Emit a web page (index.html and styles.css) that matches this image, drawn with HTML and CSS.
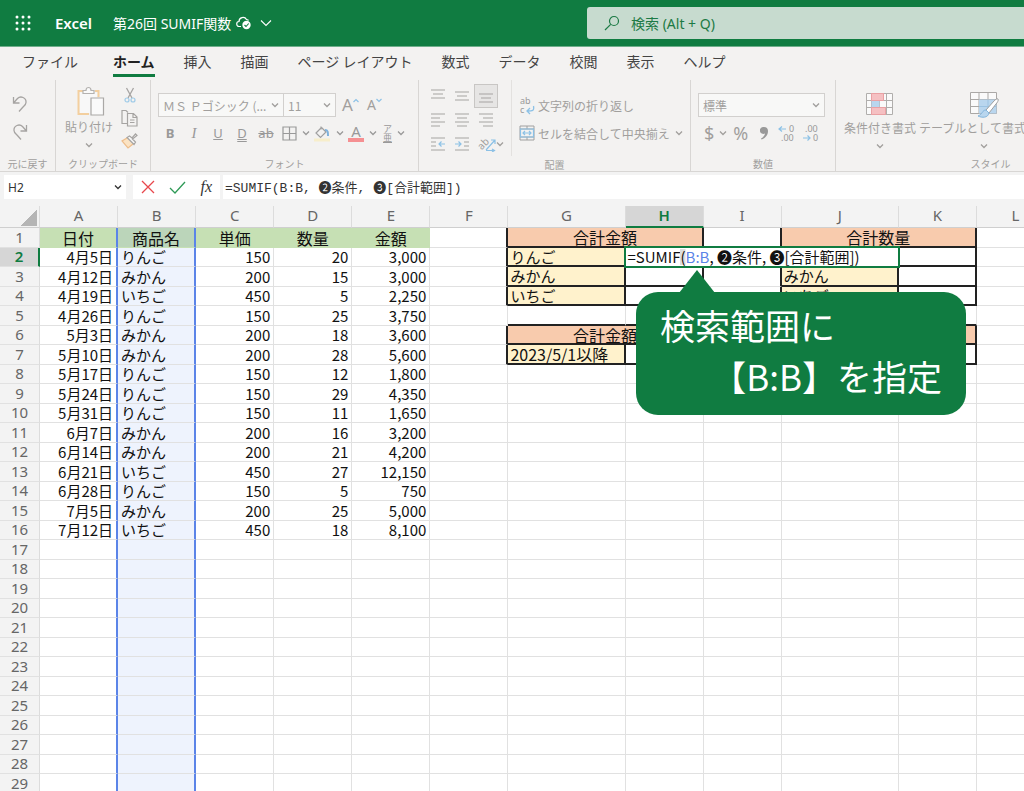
FILE: index.html
```html
<!DOCTYPE html>
<html lang="ja">
<head>
<meta charset="utf-8">
<title>第26回 SUMIF関数 - Excel</title>
<link rel="stylesheet" href="styles.css">
</head>
<body>
<svg class="defs" aria-hidden="true">
  <symbol id="chev" viewBox="0 0 8 8"><path d="M1 2.5l3 3 3-3" fill="none" stroke="currentColor" stroke-width="1.3"/></symbol>
</svg>
<header class="title-bar">
  <button class="launcher" aria-label="アプリ起動ツール"><svg width="18" height="18" viewBox="0 0 18 18" fill="#fff"><circle cx="3" cy="3" r="1.5"/><circle cx="9" cy="3" r="1.5"/><circle cx="15" cy="3" r="1.5"/><circle cx="3" cy="9" r="1.5"/><circle cx="9" cy="9" r="1.5"/><circle cx="15" cy="9" r="1.5"/><circle cx="3" cy="15" r="1.5"/><circle cx="9" cy="15" r="1.5"/><circle cx="15" cy="15" r="1.5"/></svg></button>
  <span class="app">Excel</span>
  <button class="doc">第26回 SUMIF関数
    <svg width="16" height="14" viewBox="0 0 16 14"><path d="M5 10.500H3.500a2.500 2.500 0 0 1-.5-5A4 4 0 0 1 10.500 3.500a3 3 0 0 1 2 1" fill="none" stroke="#fff" stroke-width="1.200"/><circle cx="10.500" cy="9" r="4.200" fill="#fff"/><path d="M8.500 9l1.500 1.500 2.700-3" fill="none" stroke="#107c41" stroke-width="1.100"/></svg>
    <svg width="12" height="8" viewBox="0 0 12 8"><path d="M1 1.500l5 5 5-5" fill="none" stroke="#fff" stroke-width="1.100"/></svg>
  </button>
  <label class="search"><svg width="16" height="16" viewBox="0 0 16 16" fill="none" stroke="#1c7a45" stroke-width="1.200"><circle cx="10" cy="6" r="4.500"/><path d="M6.700 9.300L1 15"/></svg><input type="text" placeholder="検索 (Alt + Q)" aria-label="検索"></label>
</header>
<nav class="tabs">
  <button class="file">ファイル</button><button class="active">ホーム</button><button>挿入</button><button>描画</button><button>ページ レイアウト</button><button>数式</button><button>データ</button><button>校閲</button><button>表示</button><button>ヘルプ</button>
</nav>
<section class="ribbon">
  <div class="group undo">
    <div class="body">
      <button aria-label="元に戻す"><svg width="16" height="18" viewBox="0 0 16 18" fill="none" stroke="#a6a4a2" stroke-width="1.300"><path d="M1.500 2v6h6M1.500 8l4-4.500c3-3 9-1 8.500 4 0 2-1.500 3-3 4.500L7 16.500"/></svg></button>
      <button aria-label="やり直し"><svg width="16" height="18" viewBox="0 0 16 18" fill="none" stroke="#a6a4a2" stroke-width="1.300"><path d="M14.500 2v6h-6M14.500 8l-4-4.500c-3-3-9-1-8.500 4 0 2 1.500 3 3 4.500L9 16.500"/></svg></button>
    </div>
    <div class="caption">元に戻す</div>
  </div>
  <div class="group clip">
    <div class="body">
      <button class="big">
        <svg width="28" height="32" viewBox="0 0 28 32" fill="none"><path d="M6 5H1.500v23H12M18 5h3.500v6" stroke="#f3cf9f" stroke-width="2"/><path d="M3 6.500h17V12h-6v15H3z" fill="#f8f8f8"/><path d="M6 7.500V4.500h3c0-4 5-4 5 0h3v3z" fill="#fafafa" stroke="#b4b2b0" stroke-width="1.200"/><path d="M14 12h12.500v17H14z" fill="#fafafa" stroke="#aaa8a6" stroke-width="1.200"/></svg>
        <span>貼り付け</span><svg class="chev"><use href="#chev"/></svg>
      </button>
      <div class="stack">
        <button aria-label="切り取り"><svg width="16" height="16" viewBox="0 0 16 16" fill="none"><path d="M4.500 1l5.500 10M11.500 1L6 11" stroke="#a6a4a2" stroke-width="1.300"/><circle cx="5" cy="13" r="2" stroke="#9fcbe8" stroke-width="1.200"/><circle cx="11" cy="13" r="2" stroke="#9fcbe8" stroke-width="1.200"/></svg></button>
        <button aria-label="コピー"><svg width="17" height="18" viewBox="0 0 17 18" fill="none" stroke="#a6a4a2" stroke-width="1.200"><path d="M6 14.500H1V1.500h4l2 2M6.500 4.500h6l3.500 3.500v9H6.500zM12 4.500v4h4M9 11h4.500M9 13.500h4.500"/></svg></button>
        <button aria-label="書式のコピー"><svg width="17" height="16" viewBox="0 0 17 16" fill="none" stroke-width="1.200"><path d="M6 5L1 8l6 7 5-4" stroke="#edbd8b" fill="#fbe3c3"/><path d="M6 4.500l7 7 1.500-2.500-3-3 4.500-3.500L14.500 1 11 5 8.500 3z" stroke="#a6a4a2" fill="#f7f7f7"/></svg></button>
      </div>
    </div>
    <div class="caption">クリップボード</div>
  </div>
  <div class="group font">
    <div class="body rows">
      <div class="line"><span class="combo family"><select aria-label="フォント"><option>ＭＳ Ｐゴシック (...</option></select><svg class="chev"><use href="#chev"/></svg></span><span class="combo size"><select aria-label="サイズ"><option>11</option></select><svg class="chev"><use href="#chev"/></svg></span>
        <button class="grow">A<svg width="6" height="5" viewBox="0 0 6 5"><path d="M.5 4L3 1.500 5.500 4" fill="none" stroke="#8cc1e6" stroke-width="1.200"/></svg></button><button class="grow small">A<svg width="6" height="5" viewBox="0 0 6 5"><path d="M.5 1L3 3.500 5.500 1" fill="none" stroke="#8cc1e6" stroke-width="1.200"/></svg></button></div>
      <div class="line tools">
        <button class="letter"><b>B</b></button><button class="letter"><i>I</i></button><button class="letter"><u>U</u></button><button class="letter dbl">D</button><button class="letter"><s>ab</s></button>
        <button class="drop" aria-label="罫線"><svg width="15" height="15" viewBox="0 0 15 15" fill="none" stroke="#999" stroke-width="1.200"><path d="M1 1h13v13H1zM7.500 1v13M1 7.500h13"/></svg><svg class="chev"><use href="#chev"/></svg></button>
        <button class="drop" aria-label="塗りつぶし"><svg width="17" height="17" viewBox="0 0 17 17" fill="none"><path d="M7 1.500v3M7 3L2 8l4.500 4.500L12 7 7.500 2.500" stroke="#a0a0a0" stroke-width="1.200"/><path d="M11 5c3 0 3 2 3 6" stroke="#7fb2dc" stroke-width="2"/><path d="M0 13.500h16v3H0z" fill="#f7eecb"/></svg><svg class="chev"><use href="#chev"/></svg></button>
        <button class="drop color" aria-label="フォントの色"><span>A</span><svg class="chev"><use href="#chev"/></svg></button>
        <button class="drop ruby" aria-label="ふりがな"><span>ア<br>亜</span><svg class="chev"><use href="#chev"/></svg></button>
      </div>
    </div>
    <div class="caption">フォント</div>
  </div>
  <div class="group align">
    <div class="body">
      <div class="pads">
        <button aria-label="上揃え"><svg viewBox="0 0 16 16"><path d="M1 2h14M3 6h10M1 10h14"/></svg></button>
        <button aria-label="上下中央揃え"><svg viewBox="0 0 16 16"><path d="M1 4h14M3 8h10M1 12h14"/></svg></button>
        <button class="on" aria-label="下揃え"><svg viewBox="0 0 16 16"><path d="M1 6h14M3 10h10M1 14h14"/></svg></button>
        <button aria-label="左揃え"><svg viewBox="0 0 16 16"><path d="M1 2h14M1 6h9M1 10h14M1 14h9"/></svg></button>
        <button aria-label="中央揃え"><svg viewBox="0 0 16 16"><path d="M1 2h14M3 6h10M1 10h14M3 14h10"/></svg></button>
        <button aria-label="右揃え"><svg viewBox="0 0 16 16"><path d="M1 2h14M5 6h10M1 10h14M5 14h10"/></svg></button>
        <button aria-label="インデントを減らす"><svg viewBox="0 0 16 16"><path d="M1 2h14M1 6h5M1 10h5M1 14h14"/><path class="blue" d="M15 8H9M11.500 5.500L9 8l2.500 2.500"/></svg></button>
        <button aria-label="インデントを増やす"><svg viewBox="0 0 16 16"><path d="M1 2h14M10 6h5M10 10h5M1 14h14"/><path class="blue" d="M1 8h6M4.500 5.500L7 8l-2.500 2.500"/></svg></button>
        <button class="angle" aria-label="方向"><span>ab</span><svg viewBox="0 0 16 16"><path class="blue" d="M6 14l9-10M11 4h4v4M6 14.500h8M12 13l2.500 1.500L12 16"/></svg><svg class="chev"><use href="#chev"/></svg></button>
      </div>
      <div class="wraps">
        <button><svg width="16" height="19" viewBox="0 0 16 19"><text x="1" y="8">ab</text><text x="1" y="17">c</text><path d="M14.500 10c1 5-1 5-6 5M11 12l-3 3 3 3" fill="none" stroke="#8cc1e6" stroke-width="1.300"/></svg>文字列の折り返し</button>
        <button class="merge"><svg width="16" height="16" viewBox="0 0 16 16" fill="none" stroke="#a0a0a0"><path d="M1 1h14v14H1zM1 4h14M1 12h14M8 1v3M8 12v3"/><path d="M1.500 4h13v8h-13zM4 8h8M6 6L4 8l2 2M10 6l2 2-2 2" stroke="#8cc1e6" stroke-width="1.200"/></svg>セルを結合して中央揃え<svg class="chev"><use href="#chev"/></svg></button>
      </div>
    </div>
    <div class="caption">配置</div>
  </div>
  <div class="group number">
    <div class="body rows">
      <span class="combo format"><select aria-label="表示形式"><option>標準</option></select><svg class="chev"><use href="#chev"/></svg></span>
      <div class="line nums">
        <button class="drop">$<svg class="chev"><use href="#chev"/></svg></button><button>%</button><button class="comma" aria-label="桁区切り"><svg width="9" height="14" viewBox="0 0 9 14"><path d="M4 1a3.500 3.500 0 1 0 1 6.500C4.500 10 3 11.500 1 12.500l.5 1C5.500 12 8 9 8 5c0-2.500-1.500-4-4-4z" fill="#999"/></svg></button>
        <button class="dec" aria-label="小数点以下の表示桁数を増やす"><svg width="18" height="19" viewBox="0 0 18 19"><text x="11" y="8">0</text><text x="3" y="17">.00</text><path d="M8 5H1M4 2.500L1 5l3 2.500"/></svg></button><button class="dec" aria-label="小数点以下の表示桁数を減らす"><svg width="18" height="19" viewBox="0 0 18 19"><text x="3" y="8">.00</text><text x="11" y="17">0</text><path d="M1 14h7M5.500 11.500L8 14l-2.500 2.500"/></svg></button>
      </div>
    </div>
    <div class="caption">数値</div>
  </div>
  <div class="group styles">
    <div class="body">
      <button class="big"><svg width="30" height="26" viewBox="0 0 30 26"><path d="M1.500 2.500h26v21h-26zM1.500 9.500h26M1.500 16.500h26M6.500 2.500v21M14.500 2.500v21M21.500 2.500v21" fill="#fafafa" stroke="#b0aeac"/><path d="M6.500 2.500h12v7h-12zM6.500 16.500h14v7h-14z" fill="#f5c0c2" stroke="#eaa0a3"/><path d="M6.500 10h8v6h-8z" fill="#b9d6ee"/></svg><span>条件付き書式</span><svg class="chev"><use href="#chev"/></svg></button>
      <button class="big"><svg width="30" height="28" viewBox="0 0 30 28"><path d="M1.500 2.500h26v21h-26zM1.500 9.500h26M1.500 16.500h26M10 2.500v21M19 2.500v21" fill="#fafafa" stroke="#aaa8a6"/><path d="M10 9.500h17.500v14H10z" fill="#b9d6ee"/><path d="M10 16.500h17M19 10v13" stroke="#9cc3e2"/><path d="M29 9c-1-1-3 1-4 2l-8 9 3 3 7-9c1-1 3-4 2-5z" fill="#fff" stroke="#a0a0a0"/><path d="M17 20c-4 0-3 4-8 6 4 2 10 2 11-3z" fill="#b9d6ee" stroke="#83b5dc"/></svg><span>テーブルとして書式設定</span><svg class="chev"><use href="#chev"/></svg></button>
    </div>
    <div class="caption">スタイル</div>
  </div>
</section>
<section class="formula">
  <div class="name-box"><input type="text" value="H2" aria-label="名前ボックス"><svg class="chev"><use href="#chev"/></svg></div>
  <div class="fx">
    <button aria-label="キャンセル"><svg width="14" height="14" viewBox="0 0 14 14"><path d="M1 1l12 12M13 1L1 13" stroke="#e8474c" stroke-width="1.300"/></svg></button>
    <button aria-label="入力"><svg width="17" height="13" viewBox="0 0 17 13"><path d="M1 7l5 5L16 1" fill="none" stroke="#2f9a57" stroke-width="1.300"/></svg></button>
    <button class="fn"><i>fx</i></button>
  </div>
  <input class="formula-text" type="text" aria-label="数式バー" value="=SUMIF(B:B, ❷条件, ❸[合計範囲])">
</section>
<main class="sheet">
  <table class="grid">
    <colgroup><col class="c-num"><col class="c"><col class="c"><col class="c"><col class="c"><col class="c"><col class="c"><col class="c-wide"><col class="c"><col class="c"><col class="c-wide"><col class="c"><col class="c"></colgroup>
    <thead><tr id="heads"><th class="corner" aria-label="すべて選択"></th></tr></thead>
    <tbody id="cells"></tbody>
  </table>
  <aside class="callout"><p>検索範囲に</p><p class="end">【B:B】を指定</p></aside>
</main>
<script src="sheet.js"></script>
</body>
</html>
```
FILE: sheet.js
```js
const columns = [...'ABCDEFGHIJKL'];
const rows = [
  ['4月5日', 'りんご', '150', '20', '3,000'],
  ['4月12日', 'みかん', '200', '15', '3,000'],
  ['4月19日', 'いちご', '450', '5', '2,250'],
  ['4月26日', 'りんご', '150', '25', '3,750'],
  ['5月3日', 'みかん', '200', '18', '3,600'],
  ['5月10日', 'みかん', '200', '28', '5,600'],
  ['5月17日', 'りんご', '150', '12', '1,800'],
  ['5月24日', 'りんご', '150', '29', '4,350'],
  ['5月31日', 'りんご', '150', '11', '1,650'],
  ['6月7日', 'みかん', '200', '16', '3,200'],
  ['6月14日', 'みかん', '200', '21', '4,200'],
  ['6月21日', 'いちご', '450', '27', '12,150'],
  ['6月28日', 'りんご', '150', '5', '750'],
  ['7月5日', 'みかん', '200', '25', '5,000'],
  ['7月12日', 'いちご', '450', '18', '8,100']
];
const cells = {};
['日付', '商品名', '単価', '数量', '金額'].forEach((t, i) => { cells[columns[i] + 1] = [t, 'head']; });
rows.forEach((r, n) => r.forEach((t, i) => { cells[columns[i] + (n + 2)] = [t, i === 1 ? '' : 'num']; }));
Object.assign(cells, {
  G1: ['合計金額', 'peach', 2], J1: ['合計数量', 'peach', 2],
  G6: ['合計金額', 'peach', 2], J6: ['', 'peach', 2],
  G2: ['りんご', 'key'], G3: ['みかん', 'key'], G4: ['いちご', 'key'],
  J2: ['', 'key'], J3: ['みかん', 'key'], J4: ['いちご', 'key'],
  G7: ['2023/5/1以降', 'key period'], J7: ['', 'key']
});

const heads = document.getElementById('heads');
columns.forEach(c => {
  const th = document.createElement('th');
  th.scope = 'col';
  th.textContent = c;
  if (c === 'H') th.className = 'current';
  heads.append(th);
});

const body = document.getElementById('cells');
for (let r = 1; r <= 29; r++) {
  const tr = body.insertRow();
  const th = document.createElement('th');
  th.scope = 'row';
  th.textContent = r;
  if (r === 2) th.className = 'current';
  tr.append(th);
  for (let i = 0; i < columns.length; i++) {
    const c = columns[i];
    const td = tr.insertCell();
    const [text, cls, span] = cells[c + r] || ['', ''];
    td.textContent = text;
    td.className = cls;
    if (c === 'A') td.classList.add('range-edge');
    if (c === 'B') td.classList.add('range');
    const boxed = r < 8 && r !== 5;
    if (boxed && 'GHJK'.includes(c)) td.classList.add('box');
    if (boxed && 'FI'.includes(c)) td.classList.add('box-left');
    if (r === 5 && 'GHJK'.includes(c)) td.classList.add('box-top');
    if (c + r === 'H2') {
      td.innerHTML = '<div class="editor" contenteditable="true" spellcheck="false">=SUMIF<span class="paren">(</span><span class="ref">B:B</span>, ❷条件, ❸[合計範囲])</div>';
    }
    if (span) {
      td.colSpan = span;
      i += span - 1;
    }
  }
}
```
FILE: styles.css
```css
* { box-sizing: border-box; }
body { margin: 0; height: 100vh; display: flex; flex-direction: column; overflow: hidden; background: #f3f2f1; color: #333; font-family: "Noto Sans", "Noto Sans CJK JP", sans-serif; }
button, input, select { font: inherit; color: inherit; border: 0; background: none; padding: 0; margin: 0; }
button { display: flex; align-items: center; justify-content: center; white-space: nowrap; }
select { appearance: none; }
.defs { position: absolute; width: 0; height: 0; }
.chev { width: 8px; height: 8px; flex: none; }

.title-bar { flex: none; height: 47px; display: flex; align-items: center; background: #107c41; color: #fff; border-bottom: 1px solid #6fae8b; }
.launcher { margin-left: 14px; }
.app { margin-left: 23px; font-size: 15px; font-weight: 600; }
.doc { margin-left: 21px; gap: 5px; font-size: 14px; }
.doc svg + svg { margin-left: 3px; }
.search { margin-left: auto; width: 437px; height: 32px; display: flex; align-items: center; gap: 11px; padding-left: 17px; background: #c7dbcf; border-radius: 3px 0 0 3px; }
.search input { flex: 1; font-size: 14px; }
.search input::placeholder { color: #1c7a45; opacity: 1; }

.tabs { flex: none; height: 33px; display: flex; gap: 29px; padding-left: 22px; font-family: "Noto Sans CJK JP", sans-serif; font-size: 14px; color: #444; }
.tabs button { height: 30px; border-bottom: 3px solid transparent; }
.tabs .file { margin-right: 6px; }
.tabs .active { font-weight: 700; color: #222; border-bottom-color: #107c41; }

.ribbon { flex: none; height: 92px; display: flex; overflow: hidden; color: #a19f9d; border-bottom: 1px solid #d8d6d4; font-size: 12px; font-family: "Noto Sans CJK JP", sans-serif; }
.group { flex: none; display: flex; flex-direction: column; }
.group + .group { border-left: 1px solid #d8d6d4; }
.body { flex: 1; display: flex; }
.caption { height: 15px; line-height: 15px; font-size: 10px; text-align: center; }
.line { display: flex; align-items: center; }
.rows { flex-direction: column; padding: 13px 0 0 7px; gap: 4px; }
.big { flex-direction: column; justify-content: flex-start; }
.big span { height: 18px; line-height: 18px; }
.big .chev { margin-top: 5px; }
.undo { width: 55px; }
.undo .body { flex-direction: column; gap: 10px; padding: 15px 0 0 12px; align-items: flex-start; }
.clip { width: 95px; }
.clip .body { padding-left: 9px; gap: 8px; }
.clip .big { padding-top: 6px; }
.clip .big > svg:first-child { margin-left: 4px; }
.stack { display: flex; flex-direction: column; align-items: center; gap: 6px; padding-top: 7px; }
.font { width: 268px; }
.combo { display: flex; align-items: center; height: 24px; border: 1px solid #d2d0ce; background: #f8f8f7; padding: 0 4px; }
.combo select { flex: 1; min-width: 0; font-size: 12px; }
.family { width: 126px; }
.size { width: 52px; border-left: 0; }
.grow { align-items: flex-start; margin-left: 6px; font: 17px/20px "Noto Sans", sans-serif; }
.grow svg { margin-top: 3px; }
.grow.small { font-size: 14px; margin-left: 8px; }
.tools { height: 24px; font-family: "Noto Sans", sans-serif; font-size: 13px; color: #999; }
.letter { width: 24px; }
.letter i { font-family: "Liberation Serif", serif; font-size: 15px; }
.dbl { text-decoration: underline double; }
.drop { gap: 5px; }
.tools .drop { margin-left: 4px; }
.color span { width: 16px; font-size: 15px; line-height: 14px; border-bottom: 4px solid #f59092; }
.tools .ruby { margin-left: 6px; }
.ruby span { font: 9px/9px "Noto Sans CJK JP", sans-serif; border-bottom: 1px solid #999; }
.align { width: 272px; }
.pads { display: grid; grid-template-columns: 24px 24px 24px; grid-template-rows: 24px 24px 24px; padding: 4px 13px 0 7px; margin-bottom: 1px; border-right: 1px solid #e3e1df; }
.pads svg:not(.chev) { width: 16px; height: 16px; fill: none; stroke: #a6a4a2; stroke-width: 1.2; flex: none; }
.pads .blue { stroke: #8cc1e6; }
.pads .on { background: #e6e5e4; border: 1px solid #c8c6c4; }
.angle span { font-size: 10px; transform: rotate(-45deg); margin-right: -10px; padding-bottom: 4px; }
.pads .angle { width: 34px; }
.wraps { display: flex; flex-direction: column; align-items: flex-start; gap: 4px; padding: 13px 0 0 7px; }
.wraps button { height: 24px; gap: 3px; }
.wraps .chev { margin-left: 2px; }
.wraps text, .dec text { font-size: 9px; fill: #999; font-family: "Noto Sans", sans-serif; }
.number { width: 145px; }
.format { width: 127px; }
.nums { height: 24px; padding-left: 6px; font: 18px "Noto Sans", sans-serif; }
.nums .drop { gap: 5px; }
.nums button + button { margin-left: 6px; }
.nums .comma + .dec { margin-left: 9px; }
.nums .comma { margin-left: 12px; }
.dec path { fill: none; stroke: #8cc1e6; stroke-width: 1.2; }
.styles { width: 310px; }
.styles .body { padding: 9px 0 0 8px; gap: 3px; }
.styles .big svg:first-child { height: 30px; }

.formula { flex: none; height: 34px; display: flex; padding: 3px 0 7px 4px; background: #f3f3f3; font-size: 12px; }
.name-box { width: 122px; display: flex; align-items: center; padding: 0 4px; background: #fff; }
.name-box input { flex: 1; min-width: 0; }
.fx { width: 87px; margin: 0 3px 0 7px; display: flex; align-items: center; justify-content: space-between; padding: 0 8px; background: #fff; }
.fn { font: 16px "Liberation Serif", serif; }
.formula-text { flex: 1; min-width: 0; padding: 0 2px 2px; background: #fff; font-family: "Liberation Mono", "Noto Sans CJK JP", monospace; font-size: 13px; }

.sheet { flex: 1; min-height: 0; position: relative; overflow: hidden; background: #fff; }
.grid { table-layout: fixed; width: 1055px; border-collapse: separate; border-spacing: 0; font-family: "Noto Sans CJK JP", sans-serif; font-size: 15px; line-height: 16px; color: #111; }
.c-num { width: 40px; }
.c { width: 78px; }
.c-wide { width: 117px; }
.grid tbody tr { height: 19px; }
.grid tbody tr:nth-child(odd) { height: 20px; }
.grid th { padding: 0 0 1px; font: 15px/17px "Noto Sans", sans-serif; color: #666; background: #f3f3f3; border-right: 1px solid #dcdcdc; border-bottom: 1px solid #e1e1e1; }
.grid thead th { height: 22px; padding-bottom: 3px; border-bottom-color: #cfcfcf; }
.grid .corner { background: linear-gradient(135deg, #f3f3f3 50%, #b5b5b5 50%) 21px 4px / 16px 16px no-repeat #f3f3f3; }
.grid .current { background: #d6d6d6; color: #107c41; font-weight: 600; }
.grid thead .current { border-bottom: 2px solid #107c41; padding-bottom: 2px; }
.grid tbody .current { border-right: 2px solid #107c41; }
.grid td { padding: 0 3px; white-space: nowrap; border-right: 1px solid #e1e1e1; border-bottom: 1px solid #e1e1e1; }
.grid .num { text-align: right; }
.grid .head, .grid .peach { text-align: center; font-size: 16px; }
.grid .head { background: #c6e0b4; border-color: #c6e0b4; }
.grid .peach { background: #f8cbad; }
.grid .key { background: #fff2cc; padding-left: 2px; }
.grid .period { font-size: 16px; }
.grid .range { background: #eef3fd; border-right: 2px solid #5b84e8; }
.grid .range.head { background: #bbd5ba; }
.grid .range-edge { border-right: 2px solid #5b84e8; }
.grid .box { border-right: 2px solid #222; border-bottom: 2px solid #222; position: relative; }
.grid .box-left { border-right: 2px solid #222; }
.grid .box-top { border-bottom: 2px solid #222; }
.editor { position: absolute; z-index: 1; left: -2px; top: -2px; width: 276px; height: 22px; padding: 0 2px; line-height: 18px; border: 2px solid #107c41; background: #fff; }
.paren { background: linear-gradient(#ddd, #ddd) center / 100% 16px no-repeat; }
.ref { color: #5b84e8; }
.callout { position: absolute; z-index: 2; left: 636px; top: 86px; width: 330px; padding: 7px 24px 14px; border-radius: 22px; background: #107c41; color: #fff; font: 400 35px/51px "Noto Sans CJK JP", sans-serif; }
.callout::before { content: ""; position: absolute; left: 43px; top: -22px; border: solid transparent; border-width: 0 18px 23px; border-bottom-color: #107c41; }
.callout p { margin: 0; }
.callout .end { text-align: right; }
```
